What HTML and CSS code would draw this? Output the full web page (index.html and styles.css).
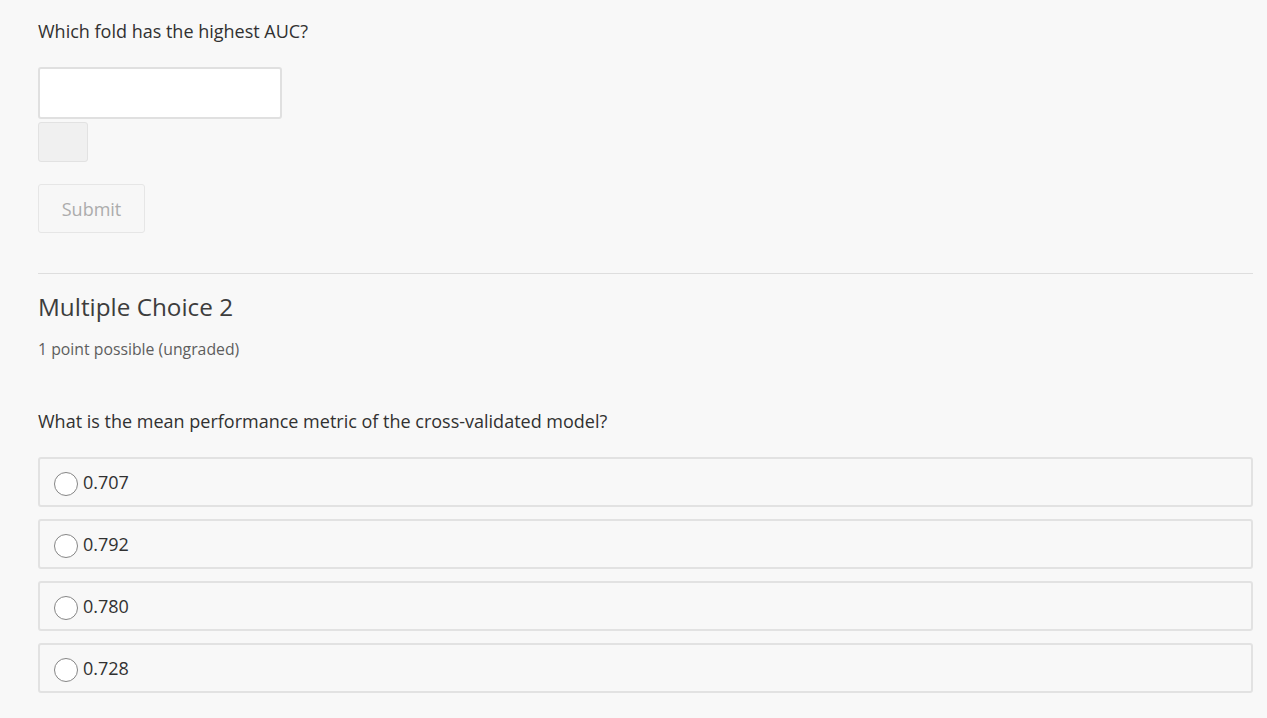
FILE: index.html
```html
<!DOCTYPE html>
<html>
<head>
<meta charset="utf-8">
<link rel="stylesheet" href="styles.css">
</head>
<body>
<div class="page">
  <p class="question first">Which fold has the highest AUC?</p>
  <input class="answer" type="text">
  <div class="status-box"></div>
  <button class="submit">Submit</button>
  <hr class="divider">
  <h2 class="title">Multiple Choice 2</h2>
  <div class="points">1 point possible (ungraded)</div>
  <p class="question second">What is the mean performance metric of the cross-validated model?</p>
  <div class="options">
    <label class="option"><span class="radio"></span><span class="opt-text">0.707</span></label>
    <label class="option"><span class="radio"></span><span class="opt-text">0.792</span></label>
    <label class="option"><span class="radio"></span><span class="opt-text">0.780</span></label>
    <label class="option"><span class="radio"></span><span class="opt-text">0.728</span></label>
  </div>
</div>
</body>
</html>
```

FILE: styles.css
```css
html, body {
  margin: 0;
  padding: 0;
  background: #f8f8f8;
}
body {
  font-family: "Open Sans", "Liberation Sans", sans-serif;
  color: #313131;
}
.page {
  padding: 20px 14px 20px 38px;
  display: flex;
  flex-direction: column;
  align-items: flex-start;
}
.question {
  margin: 0;
  font-size: 18px;
  line-height: 22px;
  color: #313131;
}
.answer {
  margin-top: 25px;
  box-sizing: border-box;
  width: 244px;
  height: 52px;
  border: 2px solid #e0e0e0;
  border-radius: 3px;
  background: #fff;
  outline: none;
}
.status-box {
  margin-top: 3px;
  box-sizing: border-box;
  width: 50px;
  height: 40px;
  background: #f0f0f0;
  border: 1px solid #e2e2e2;
  border-radius: 3px;
}
.submit {
  margin-top: 22px;
  box-sizing: border-box;
  width: 107px;
  height: 49px;
  background: #f7f7f7;
  border: 1px solid #e6e6e6;
  border-radius: 3px;
  font-family: "Open Sans", "Liberation Sans", sans-serif;
  font-size: 18px;
  color: #acacac;
  padding: 0;
}
.divider {
  align-self: stretch;
  margin: 40px 0 0 0;
  border: 0;
  border-top: 1px solid #dedede;
  height: 0;
}
.title {
  margin: 18px 0 0 0;
  font-size: 24.3px;
  line-height: 30px;
  font-weight: 400;
  color: #3d3d3d;
}
.points {
  margin-top: 17px;
  font-size: 15.8px;
  line-height: 20px;
  color: #5e5e5e;
}
.question.second {
  margin-top: 51px;
}
.options {
  align-self: stretch;
  margin-top: 25px;
  display: flex;
  flex-direction: column;
  gap: 12px;
}
.option {
  box-sizing: border-box;
  height: 50px;
  border: 2px solid #e2e2e2;
  border-radius: 3px;
  background: #f8f8f8;
  display: flex;
  align-items: center;
  padding-left: 14px;
}
.radio {
  box-sizing: border-box;
  width: 24px;
  height: 24px;
  border: 1px solid #858585;
  border-radius: 50%;
  background: #fff;
  margin-right: 5px;
  position: relative;
  top: 2px;
}
.opt-text {
  font-size: 18px;
  line-height: 24px;
  color: #313131;
}
```
